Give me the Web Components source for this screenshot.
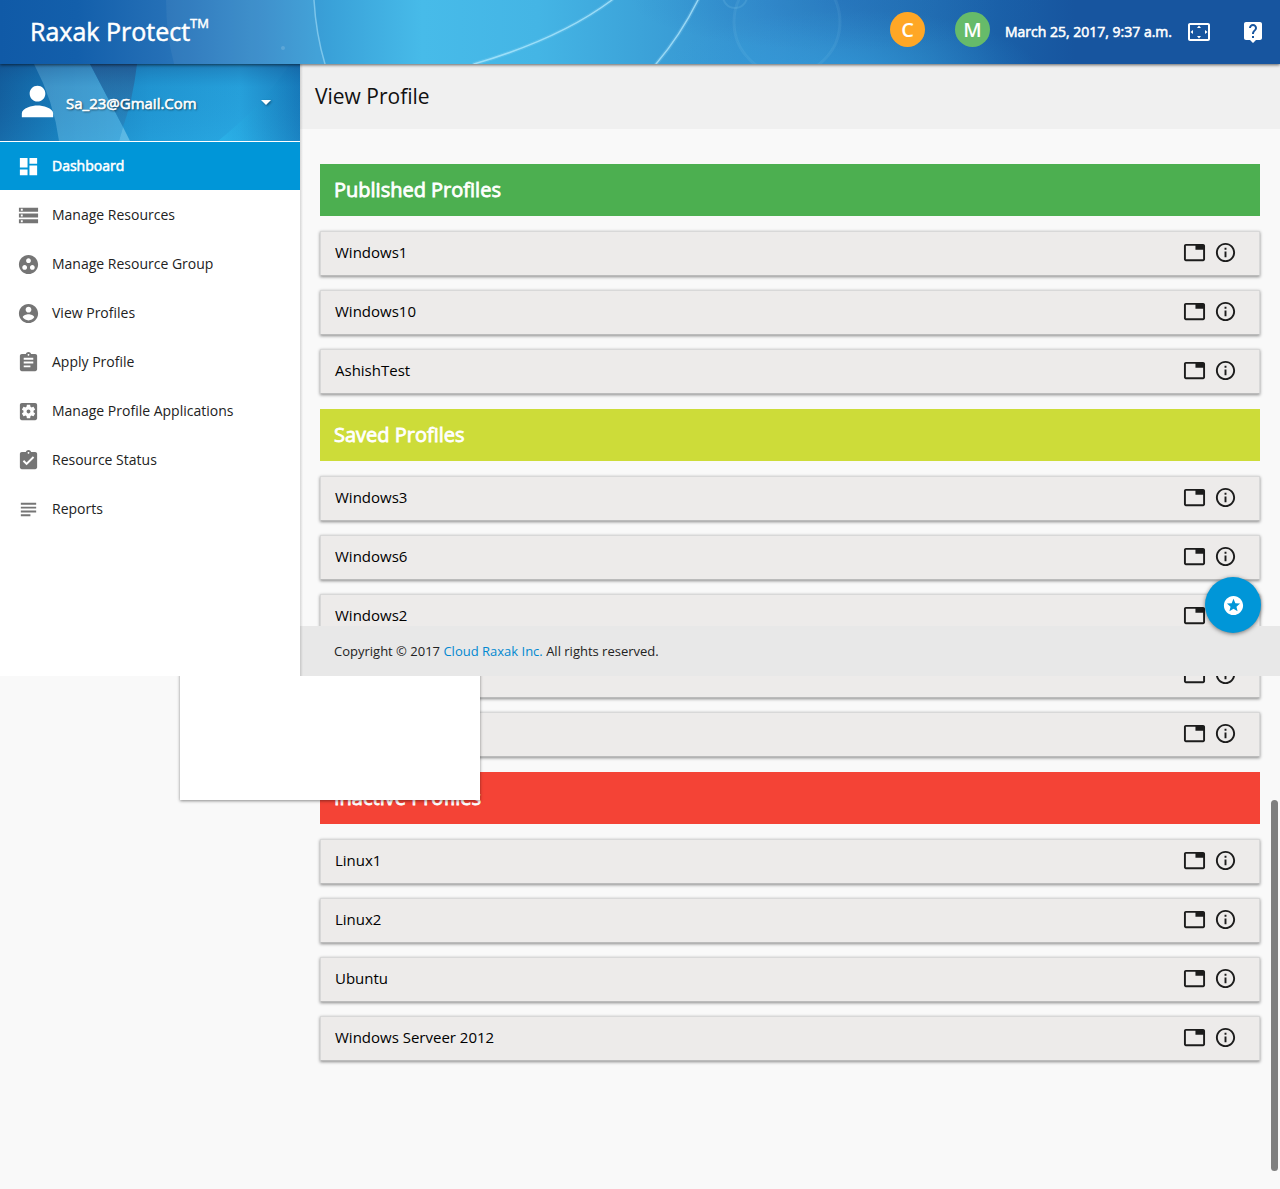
<!DOCTYPE html>
<html lang="en">
<head>
<meta charset="utf-8">
<meta name="viewport" content="width=device-width, initial-scale=1">
<title>Raxak Protect</title>
<style>
  html { background: #f9f9f9; }
  body { margin: 0; font-family: "Open Sans", "Noto Sans", sans-serif; font-size: 15px; line-height: 24px; color: #111; }
</style>
</head>
<body>
<raxak-app></raxak-app>
<script>
const ICONS = {
  person: 'M12 12c2.21 0 4-1.79 4-4s-1.79-4-4-4-4 1.79-4 4 1.79 4 4 4zm0 2c-2.67 0-8 1.34-8 4v2h16v-2c0-2.66-5.33-4-8-4z',
  caret: 'M7 10l5 5 5-5z',
  dashboard: 'M3 13h8V3H3v10zm0 8h8v-6H3v6zm10 0h8V11h-8v10zm0-18v6h8V3h-8z',
  storage: 'M2 20h20v-4H2v4zm2-3h2v2H4v-2zM2 4v4h20V4H2zm4 3H4V5h2v2zm-4 7h20v-4H2v4zm2-3h2v2H4v-2z',
  group: 'M12 2C6.48 2 2 6.48 2 12s4.48 10 10 10 10-4.48 10-10S17.52 2 12 2zM8 17.5c-1.38 0-2.5-1.12-2.5-2.5s1.12-2.5 2.5-2.5 2.5 1.12 2.5 2.5-1.12 2.5-2.5 2.5zM9.5 8c0-1.38 1.12-2.5 2.5-2.5s2.5 1.12 2.5 2.5-1.12 2.5-2.5 2.5S9.5 9.38 9.5 8zm6.5 9.5c-1.38 0-2.5-1.12-2.5-2.5s1.12-2.5 2.5-2.5 2.5 1.12 2.5 2.5-1.12 2.5-2.5 2.5z',
  account: 'M12 2C6.48 2 2 6.48 2 12s4.48 10 10 10 10-4.48 10-10S17.52 2 12 2zm0 3c1.66 0 3 1.34 3 3s-1.34 3-3 3-3-1.34-3-3 1.34-3 3-3zm0 14.2c-2.5 0-4.71-1.28-6-3.22.03-1.99 4-3.08 6-3.08 1.99 0 5.97 1.09 6 3.08-1.29 1.94-3.5 3.22-6 3.22z',
  assignment: 'M19 3h-4.18C14.4 1.84 13.3 1 12 1c-1.3 0-2.4.84-2.82 2H5c-1.1 0-2 .9-2 2v14c0 1.1.9 2 2 2h14c1.1 0 2-.9 2-2V5c0-1.1-.9-2-2-2zm-7 0c.55 0 1 .45 1 1s-.45 1-1 1-1-.45-1-1 .45-1 1-1zm2 14H7v-2h7v2zm3-4H7v-2h10v2zm0-4H7V7h10v2z',
  settings: 'M12 10c-1.1 0-2 .9-2 2s.9 2 2 2 2-.9 2-2-.9-2-2-2zm7-7H5c-1.11 0-2 .9-2 2v14c0 1.1.89 2 2 2h14c1.11 0 2-.9 2-2V5c0-1.1-.89-2-2-2zm-1.75 9c0 .23-.02.46-.05.68l1.48 1.16c.13.11.17.3.08.45l-1.4 2.42c-.09.15-.27.21-.43.15l-1.74-.7c-.36.28-.76.51-1.18.69l-.26 1.85c-.03.17-.18.3-.35.3h-2.8c-.17 0-.32-.13-.35-.29l-.26-1.85c-.43-.18-.82-.41-1.18-.69l-1.74.7c-.16.06-.34 0-.43-.15l-1.4-2.42c-.09-.15-.05-.34.08-.45l1.48-1.16c-.03-.23-.05-.46-.05-.69 0-.23.02-.46.05-.68l-1.48-1.16c-.13-.11-.17-.3-.08-.45l1.4-2.42c.09-.15.27-.21.43-.15l1.74.7c.36-.28.76-.51 1.18-.69l.26-1.85c.03-.17.18-.3.35-.3h2.8c.17 0 .32.13.35.29l.26 1.85c.43.18.82.41 1.18.69l1.74-.7c.16-.06.34 0 .43.15l1.4 2.42c.09.15.05.34-.08.45l-1.48 1.16c.03.23.05.46.05.69z',
  done: 'M19 3h-4.18C14.4 1.84 13.3 1 12 1c-1.3 0-2.4.84-2.82 2H5c-1.1 0-2 .9-2 2v14c0 1.1.9 2 2 2h14c1.1 0 2-.9 2-2V5c0-1.1-.9-2-2-2zm-7 0c.55 0 1 .45 1 1s-.45 1-1 1-1-.45-1-1 .45-1 1-1zm-2 14l-4-4 1.41-1.41L10 14.17l6.59-6.59L18 9l-8 8z',
  subject: 'M14 17H4v2h10v-2zm6-8H4v2h16V9zM4 15h16v-2H4v2zM4 5v2h16V5H4z',
  tab: 'M21 3H3c-1.1 0-2 .9-2 2v14c0 1.1.9 2 2 2h18c1.1 0 2-.9 2-2V5c0-1.1-.9-2-2-2zm0 16H3V5h10v4h8v10z',
  info: 'M11 17h2v-6h-2v6zm1-15C6.48 2 2 6.48 2 12s4.48 10 10 10 10-4.48 10-10S17.52 2 12 2zm0 18c-4.41 0-8-3.59-8-8s3.59-8 8-8 8 3.59 8 8-3.59 8-8 8zM11 9h2V7h-2v2z',
  overscan: 'M12.01 5.5L10 8h4l-1.99-2.5zM18 10v4l2.5-1.99L18 10zM6 10l-2.5 2.01L6 14v-4zm8 6h-4l2.01 2.5L14 16zm7-13H3c-1.1 0-2 .9-2 2v14c0 1.1.9 2 2 2h18c1.1 0 2-.9 2-2V5c0-1.1-.9-2-2-2zm0 16.01H3V4.99h18v14.02z',
  help: 'M19 2H5c-1.11 0-2 .9-2 2v14c0 1.1.89 2 2 2h4l3 3 3-3h4c1.1 0 2-.9 2-2V4c0-1.1-.9-2-2-2zm-6 16h-2v-2h2v2zm2.07-7.75l-.9.92C13.45 11.9 13 12.5 13 14h-2v-.5c0-1.1.45-2.1 1.17-2.83l1.24-1.26c.37-.36.59-.86.59-1.41 0-1.1-.9-2-2-2s-2 .9-2 2H8c0-2.21 1.79-4 4-4s4 1.79 4 4c0 .88-.36 1.68-.93 2.25z',
  stars: 'M11.99 2C6.47 2 2 6.48 2 12s4.47 10 9.99 10C17.52 22 22 17.52 22 12S17.52 2 11.99 2zm4.24 16L12 15.45 7.77 18l1.12-4.81-3.73-3.23 4.92-.42L12 5l1.92 4.53 4.92.42-3.73 3.23L16.23 18z'
};

const BASE = `*{box-sizing:border-box}
  button{font:inherit;color:inherit;background:none;border:0;padding:0;margin:0;cursor:pointer;display:flex;align-items:center}`;

function define(name, html) {
  customElements.define(name, class extends HTMLElement {
    constructor() {
      super();
      const root = this.attachShadow({ mode: 'open' });
      root.innerHTML = typeof html === 'function' ? html(this) : html;
    }
  });
}

customElements.define('md-icon', class extends HTMLElement {
  connectedCallback() {
    if (this.shadowRoot) return;
    this.attachShadow({ mode: 'open' }).innerHTML = `
      <style>:host{display:block;flex:none;width:var(--size,23px);height:var(--size,23px)} svg{display:block;width:100%;height:100%}</style>
      <svg viewBox="0 0 24 24" fill="currentColor" aria-hidden="true"><path d="${ICONS[this.getAttribute('name')]}"/></svg>`;
  }
});

define('round-badge', `
  <style>
    :host{display:flex;align-items:center;justify-content:center;width:35px;height:35px;margin-bottom:5px;border-radius:50%;
      color:#fff;font-size:20px;font-weight:600;line-height:35px}
  </style><slot></slot>`);

define('app-header', `
  <style>${BASE}
    :host{display:flex;align-items:center;justify-content:space-between;position:relative;z-index:5;height:64px;
      padding:0 15px 0 30px;color:#fff;background:#17559f;box-shadow:0 1px 3px rgba(0,0,0,.6)}
    .art{position:absolute;inset:0;width:100%;height:100%}
    h1{position:relative;margin:0;padding-bottom:2px;font-size:25px;line-height:36px;font-weight:400;-webkit-text-stroke:.02em}
    sup{font-size:13px;line-height:13px;vertical-align:13px}
    .tools{position:relative;display:flex;align-items:center}
    .badges{display:flex;gap:30px;margin-right:15px}
    time{font-size:14px;-webkit-text-stroke:.04em;margin-right:15px}
    md-icon{--size:24px}
    .help{margin-left:30px}
  </style>
  <svg class="art" viewBox="0 0 1280 64" preserveAspectRatio="none" aria-hidden="true">
    <defs>
      <linearGradient id="sky">
        <stop offset="0" stop-color="#105aa7"/><stop offset=".06" stop-color="#135fab"/>
        <stop offset=".125" stop-color="#246fb6"/><stop offset=".2" stop-color="#358ac9"/>
        <stop offset=".26" stop-color="#3aa2d9"/><stop offset=".33" stop-color="#47bbe9"/>
        <stop offset=".42" stop-color="#44b5e5"/><stop offset=".5" stop-color="#3ca3d9"/>
        <stop offset=".6" stop-color="#338dcd"/><stop offset=".66" stop-color="#2c7fc1"/>
        <stop offset=".72" stop-color="#2371b4"/><stop offset=".78" stop-color="#1a60a8"/>
        <stop offset=".84" stop-color="#17559f"/>
      </linearGradient>
      <radialGradient id="glow"><stop offset="0" stop-color="#35a8e6" stop-opacity=".5"/><stop offset="1" stop-color="#35a8e6" stop-opacity="0"/></radialGradient>
      <radialGradient id="shade"><stop offset="0" stop-color="#1a60b0" stop-opacity=".3"/><stop offset="1" stop-color="#1a60b0" stop-opacity="0"/></radialGradient>
    </defs>
    <rect width="1280" height="64" fill="url(#sky)"/>
    <ellipse cx="850" cy="74" rx="190" ry="64" fill="url(#glow)"/>
    <ellipse cx="840" cy="0" rx="210" ry="50" fill="url(#shade)"/>
    <path d="M166 0Q166 34 174 64H325Q316 34 314 0z" fill="#fff" opacity=".05"/>
    <g fill="none" stroke="#b9ecff" stroke-linecap="round">
      <path d="M314 0Q316 34 325 64" stroke-width="1.5" opacity=".5"/>
      <path d="M474 64Q560 39 612 0" stroke-width="4" opacity=".15"/>
      <path d="M474 64Q560 39 612 0" stroke-width="1.5" opacity=".7"/>
      <path d="M656 64Q680 36 698 0" stroke-width="4" opacity=".15"/>
      <path d="M656 64Q680 36 698 0" stroke-width="1.5" opacity=".7"/>
      <circle cx="787" cy="22" r="53" stroke-width="3" opacity=".08"/>
      <circle cx="735" cy="-4" r="12" stroke-width="2" opacity=".12"/>
    </g>
    <circle cx="787" cy="22" r="53" fill="#4db0e6" opacity=".08"/>
    <circle cx="283" cy="48" r="2" fill="#fff" opacity=".15"/>
  </svg>
  <h1>Raxak Protect<sup>TM</sup></h1>
  <div class="tools">
    <div class="badges">
      <round-badge style="background:#ffa726">C</round-badge>
      <round-badge style="background:#66bb6a">M</round-badge>
    </div>
    <time datetime="2017-03-25T09:37">March 25, 2017, 9:37 a.m.</time>
    <button aria-label="Full screen"><md-icon name="overscan"></md-icon></button>
    <button class="help" aria-label="Help"><md-icon name="help"></md-icon></button>
  </div>`);

define('user-card', `
  <style>${BASE}
    :host{display:block;position:relative;height:77px;background:#1b87c6}
    svg{position:absolute;inset:0;width:100%;height:100%}
    button{position:relative;width:100%;height:100%;padding:0 22px 2px 14px;color:#fff;text-align:left}
    .person{--size:47px}
    .name{flex:1;margin-left:5px;padding-top:2px;font-size:15px;-webkit-text-stroke:.04em;text-shadow:1px 1px 2px rgba(0,0,0,.7)}
    .caret{--size:24px;filter:drop-shadow(1px 1px 1px rgba(0,0,0,.4))}
  </style>
  <svg viewBox="0 0 300 77" preserveAspectRatio="none" aria-hidden="true">
    <defs>
      <linearGradient id="a"><stop offset="0" stop-color="#145f9e"/><stop offset=".2" stop-color="#177bb9"/><stop offset=".5" stop-color="#2299d5"/><stop offset=".8" stop-color="#28a5df"/><stop offset="1" stop-color="#1b80bf"/></linearGradient>
      <linearGradient id="b" x2="0" y2="1"><stop offset="0" stop-color="#123f7d" stop-opacity=".35"/><stop offset=".3" stop-color="#0a5ca0" stop-opacity=".08"/><stop offset="1" stop-color="#2cb4ee" stop-opacity=".15"/></linearGradient>
      <linearGradient id="c" x2="0" y2="1"><stop offset="0" stop-color="#2c5f95" stop-opacity=".8"/><stop offset="1" stop-color="#2c77ad" stop-opacity=".5"/></linearGradient>
      <linearGradient id="d" x2="1" y2="0"><stop offset="0" stop-color="#2fc0f2" stop-opacity=".5"/><stop offset="1" stop-color="#1477b8" stop-opacity=".5"/></linearGradient>
    </defs>
    <rect width="300" height="77" fill="url(#a)"/>
    <path d="M34 0H90L123 63L119 77H59Q54 38 34 0z" fill="#8fd3f2" opacity=".38"/>
    <path d="M90 0H137Q133 35 123 63z" fill="url(#c)"/>
    <path d="M123 63L130 77H119z" fill="#9bdcf6" opacity=".55"/>
    <path d="M290 0Q260 44 218 77H300V0z" fill="url(#d)"/>
    <rect width="300" height="77" fill="url(#b)"/>
  </svg>
  <button aria-haspopup="menu"><md-icon class="person" name="person"></md-icon><span class="name">Sa_23@Gmail.Com</span><md-icon class="caret" name="caret"></md-icon></button>`);

define('nav-item', el => `
  <style>${BASE}
    :host{display:block}
    a{display:flex;align-items:center;gap:12px;height:48px;padding:0 17px;color:#222;font-size:14px;text-decoration:none}
    md-icon{color:#757575}
    :host([active]) a{background:#0096d8;color:#fff;-webkit-text-stroke:.04em}
    :host([active]) md-icon{color:#fff}
  </style>
  <a href="#"><md-icon name="${el.getAttribute('icon')}"></md-icon><slot></slot></a>`);

define('side-bar', `
  <style>
    :host{display:block;position:relative;z-index:3;flex:none;width:300px;height:612px;background:#fff}
    :host::after{content:"";position:absolute;left:100%;top:0;bottom:0;width:3px;
      background:linear-gradient(90deg,rgba(0,0,0,.14),rgba(0,0,0,0))}
    nav{display:flex;flex-direction:column;gap:1px;margin-top:1px}
  </style>
  <user-card></user-card>
  <nav>
    <nav-item icon="dashboard" active>Dashboard</nav-item>
    <nav-item icon="storage">Manage Resources</nav-item>
    <nav-item icon="group">Manage Resource Group</nav-item>
    <nav-item icon="account">View Profiles</nav-item>
    <nav-item icon="assignment">Apply Profile</nav-item>
    <nav-item icon="settings">Manage Profile Applications</nav-item>
    <nav-item icon="done">Resource Status</nav-item>
    <nav-item icon="subject">Reports</nav-item>
  </nav>`);

define('profile-row', `
  <style>${BASE}
    :host{display:flex;box-sizing:border-box;align-items:center;gap:8px;height:45px;padding:0 22px 3px 14px;color:#000;
      background:#edebea;border:1px solid #d8d8d8;border-bottom-color:#bbb;box-shadow:0 1px 3px rgba(0,0,0,.45)}
    .name{flex:1}
    button{color:#1c1c1c}
  </style>
  <span class="name"><slot></slot></span>
  <button aria-label="Open"><md-icon name="tab"></md-icon></button>
  <button aria-label="Details"><md-icon name="info"></md-icon></button>`);

define('profile-group', `
  <style>
    :host{display:flex;flex-direction:column;gap:14px}
    h2{margin:0 0 1px;padding:0 14px;font-size:20px;line-height:52px;font-weight:400;-webkit-text-stroke:.04em;color:#fff;background:var(--tone)}
  </style>
  <h2><slot name="title"></slot></h2><slot></slot>`);

define('app-footer', `
  <style>
    :host{display:block;padding:13px 34px;font-size:13px;line-height:24px;color:#222;background:#e8e8e8}
    a{color:#0288d1;text-decoration:none}
  </style>
  Copyright © 2017 <a href="#">Cloud Raxak Inc.</a> All rights reserved.`);

define('raxak-app', `
  <style>${BASE}
    :host{display:block;position:relative;min-height:100vh}
    .body{display:flex;align-items:flex-start}
    main{flex:1;min-width:0}
    .bar{padding:0 15px;background:#f0f0f0}
    .bar h1{margin:0;font-size:21px;line-height:65px;font-weight:400}
    .groups{display:flex;flex-direction:column;gap:15px;padding:35px 20px}
    .drawer{position:absolute;z-index:1;left:180px;top:660px;width:300px;height:140px;background:#fff;box-shadow:0 1px 3px rgba(0,0,0,.45)}
    app-footer{position:absolute;z-index:2;left:300px;right:0;top:626px}
    .fab{position:absolute;z-index:4;right:19px;top:577px;width:56px;height:56px;justify-content:center;border-radius:50%;
      color:#fff;background:#0096d8;box-shadow:0 1px 4px rgba(0,0,0,.5)}
    .thumb{position:absolute;right:2px;top:800px;width:7px;height:371px;border-radius:4px;background:#7f7f7f}
  </style>
  <app-header></app-header>
  <div class="body">
    <side-bar></side-bar>
    <main>
      <div class="bar"><h1>View Profile</h1></div>
      <div class="groups">
        <profile-group style="--tone:#4caf50"><span slot="title">Published Profiles</span>
          <profile-row>Windows1</profile-row><profile-row>Windows10</profile-row><profile-row>AshishTest</profile-row>
        </profile-group>
        <profile-group style="--tone:#cddc39"><span slot="title">Saved Profiles</span>
          <profile-row>Windows3</profile-row><profile-row>Windows6</profile-row><profile-row>Windows2</profile-row>
          <profile-row></profile-row><profile-row></profile-row>
        </profile-group>
        <profile-group style="--tone:#f44336"><span slot="title">Inactive Profiles</span>
          <profile-row>Linux1</profile-row><profile-row>Linux2</profile-row><profile-row>Ubuntu</profile-row><profile-row>Windows Serveer 2012</profile-row>
        </profile-group>
      </div>
    </main>
  </div>
  <div class="drawer"></div>
  <app-footer></app-footer>
  <button class="fab" aria-label="Favourites"><md-icon name="stars"></md-icon></button>
  <div class="thumb"></div>`);
</script>
</body>
</html>
